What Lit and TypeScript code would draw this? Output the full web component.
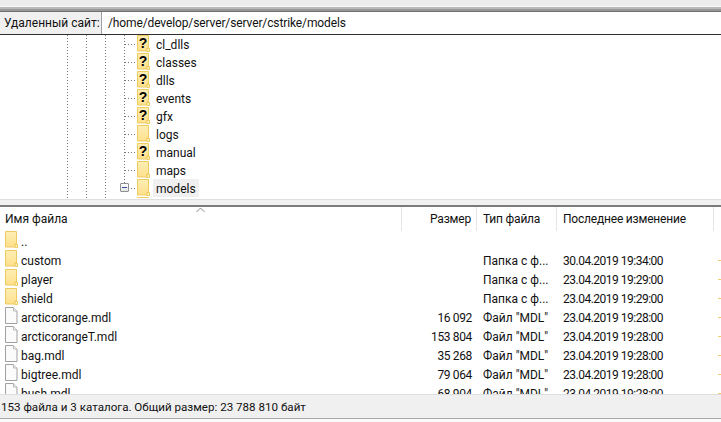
import { LitElement, html, css, svg } from "lit";
import { customElement } from "lit/decorators.js";

const folderIcon = (question = false) => html`<svg class="ico" width="13" height="17" viewBox="0 0 13 17">
  <defs><linearGradient id="fg" x1="0" y1="0" x2="0" y2="1"><stop offset="0" stop-color="#fdeeb4"/><stop offset="1" stop-color="#ffe08c"/></linearGradient></defs>
  <path d="M.5.5h11v12.5h-1.5v3H.5z" fill="url(#fg)" stroke="#eecb5e"/>
  <path d="M10 16.5v-3h2.5v3z" fill="#fff3c4" stroke="#eecb5e" stroke-width="1"/>
  ${question ? svg`<text x="6" y="13" text-anchor="middle" font-family="Liberation Sans" font-weight="700" font-size="14" fill="#000">?</text>` : ""}
</svg>`;

const fileIcon = html`<svg class="ico" width="13" height="17" viewBox="0 0 13 17">
  <path d="M.5.5h8l3.5 3.5v12.5H.5z" fill="#fbfbfb" stroke="#a0a0a0"/>
  <path d="M8.5.5v3.5h3.5" fill="#f4f4f4" stroke="#b8b8b8"/>
</svg>`;

const tree: [string, boolean][] = [
  ["cl_dlls", true], ["classes", true], ["dlls", true], ["events", true], ["gfx", true],
  ["logs", false], ["manual", true], ["maps", false],
];

const files: [string, boolean, string, string, string][] = [
  ["..", true, "", "", ""],
  ["custom", true, "", "Папка с ф...", "30.04.2019 19:34:00"],
  ["player", true, "", "Папка с ф...", "23.04.2019 19:29:00"],
  ["shield", true, "", "Папка с ф...", "23.04.2019 19:29:00"],
  ["arcticorange.mdl", false, "16 092", 'Файл "MDL"', "23.04.2019 19:28:00"],
  ["arcticorangeT.mdl", false, "153 804", 'Файл "MDL"', "23.04.2019 19:28:00"],
  ["bag.mdl", false, "35 268", 'Файл "MDL"', "23.04.2019 19:28:00"],
  ["bigtree.mdl", false, "79 064", 'Файл "MDL"', "23.04.2019 19:28:00"],
  ["bush.mdl", false, "68 904", 'Файл "MDL"', "23.04.2019 19:28:00"],
];

@customElement("app-root")
export class AppRoot extends LitElement {
  static styles = css`
    :host {
      display: flex; flex-direction: column; width: 721px; height: 422px; overflow: hidden;
      background: #fff; color: #111; font: 12px/16px Roboto, sans-serif;
    }
    .ico { display: block; flex: none; }
    .top { height: 12px; flex: none; box-sizing: border-box; background: linear-gradient(#ececec 0 6px, #f8f8f8 6px 7px, #b9b9b9 7px 9px, #989898 9px 11px, #707070 11px 12px); }
    .addr { height: 23px; flex: none; display: flex; box-sizing: border-box; border-bottom: 1px solid #2e2e2e; }
    .addr .lbl { width: 102px; box-sizing: border-box; background: #f0f0f0; border-right: 1px solid #a0a0a0; padding: 3px 0 0 4px; white-space: nowrap; }
    .addr .val { padding: 3px 0 0 6px; white-space: nowrap; letter-spacing: -0.12px; }
    .tree {
      height: 163px; flex: none; overflow: hidden; position: relative; padding-left: 137px;
      background:
        repeating-linear-gradient(#777 0 1px, transparent 1px 3px) 67px 0 / 1px 100% no-repeat,
        repeating-linear-gradient(#777 0 1px, transparent 1px 3px) 86px 0 / 1px 100% no-repeat,
        repeating-linear-gradient(#777 0 1px, transparent 1px 3px) 105px 0 / 1px 100% no-repeat,
        repeating-linear-gradient(#777 0 1px, transparent 1px 3px) 124px 0 / 1px 148px no-repeat;
    }
    .node { height: 18px; display: flex; align-items: flex-start; position: relative; }
    .node::before { content: ""; position: absolute; left: -12px; top: 9px; width: 11px; height: 1px; background: repeating-linear-gradient(90deg, #777 0 1px, transparent 1px 3px); }
    .node .t { margin-left: 3px; padding: 2px 3px 0; height: 16px; white-space: nowrap; }
    .node.sel .t { background: #f0f0f0; margin-top: 0; height: 18px; box-sizing: border-box; padding-top: 2px; }
    .node.nol::before { display: none; }
    .minus { position: absolute; left: -17px; top: 4px; width: 9px; height: 9px; box-sizing: border-box; border: 1px solid #8f8f8f; border-radius: 1px; background: linear-gradient(#fff, #e4e4e4); z-index: 1; }
    .minus::after { content: ""; position: absolute; left: 1px; top: 3px; width: 5px; height: 1px; background: #3a4f9a; }
    .split { height: 9px; flex: none; box-sizing: border-box; background: linear-gradient(#fff 0 1px, #dedede 1px 2px, #f1f1f1 2px 7px, #7c7c7c 7px 9px); }
    .head { height: 24px; flex: none; display: grid; grid-template-columns: 402px 75px 80px 157px 7px; position: relative; }
    .head > div { box-sizing: border-box; border-right: 1px solid #e5e5e5; padding: 4px 5px 0 5px; white-space: nowrap; }
    .head > div:last-child { border: 0; }
    .head .r { text-align: right; letter-spacing: -0.2px; }
    .head .c { padding-left: 6px; letter-spacing: -0.2px; }
    .sort { position: absolute; left: 196px; top: 0; display: block; }
    .list { height: 163px; flex: none; overflow: hidden; }
    .row { height: 19px; display: grid; grid-template-columns: 402px 75px 80px 157px 7px; white-space: nowrap; }
    .row .n { display: flex; padding-left: 5px; gap: 3px; }
    .row .n span { padding-top: 3px; }
    .row .s { text-align: right; padding: 3px 5px 0 0; letter-spacing: -0.35px; }
    .row .y { padding: 3px 0 0 6px; }
    .row .d { padding: 3px 0 0 6px; letter-spacing: -0.5px; }
    .dot { margin: 10px 0 0 4px; width: 3px; height: 1px; background: #f0cf6a; }
    .status { height: 25px; flex: none; box-sizing: border-box; background: #f0f0f0; border-top: 1px solid #dedede; border-bottom: 1px solid #a8a8a8; padding: 4px 0 0 1px; white-space: nowrap; font-size: 11.6px; }
    .foot { flex: 1; background: #fafafa; }
  `;

  render() {
    return html`
      <div class="top"></div>
      <div class="addr"><div class="lbl">Удаленный сайт:</div><div class="val">/home/develop/server/server/cstrike/models</div></div>
      <div class="tree">
        ${tree.map(([n, q]) => html`<div class="node">${folderIcon(q)}<div class="t">${n}</div></div>`)}
        <div class="node sel"><span class="minus"></span>${folderIcon()}<div class="t">models</div></div>
        <div class="node nol">${folderIcon()}</div>
      </div>
      <div class="split"></div>
      <div class="head">
        <div>Имя файла</div><div class="r">Размер</div><div class="c">Тип файла</div><div class="c">Последнее изменение</div><div></div>
        <svg class="sort" width="9" height="6" viewBox="0 0 9 6"><path d="M.5 5 4.5 1l4 4" fill="none" stroke="#8a8a8a"/></svg>
      </div>
      <div class="list">
        ${files.map(([n, f, s, t, d]) => html`<div class="row">
          <div class="n">${f ? folderIcon() : fileIcon}<span>${n}</span></div>
          <div class="s">${s}</div><div class="y">${t}</div><div class="d">${d}</div>
          ${n === ".." ? html`<div></div>` : html`<div class="dot"></div>`}
        </div>`)}
      </div>
      <div class="status">153 файла и 3 каталога. Общий размер: 23 788 810 байт</div>
      <div class="foot"></div>
    `;
  }
}
